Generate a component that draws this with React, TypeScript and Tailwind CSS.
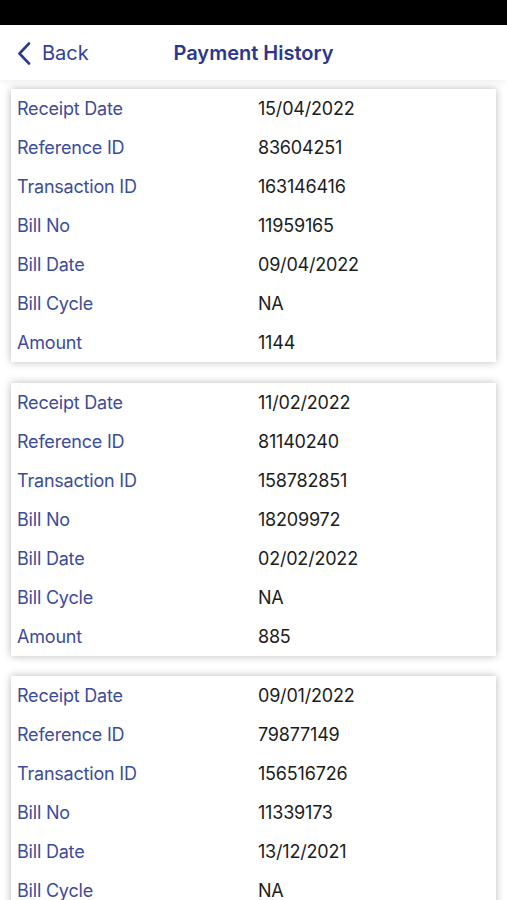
interface Payment {
  receiptDate: string;
  referenceId: string;
  transactionId: string;
  billNo: string;
  billDate: string;
  billCycle: string;
  amount: string;
}

const payments: Payment[] = [
  {
    receiptDate: '15/04/2022',
    referenceId: '83604251',
    transactionId: '163146416',
    billNo: '11959165',
    billDate: '09/04/2022',
    billCycle: 'NA',
    amount: '1144',
  },
  {
    receiptDate: '11/02/2022',
    referenceId: '81140240',
    transactionId: '158782851',
    billNo: '18209972',
    billDate: '02/02/2022',
    billCycle: 'NA',
    amount: '885',
  },
  {
    receiptDate: '09/01/2022',
    referenceId: '79877149',
    transactionId: '156516726',
    billNo: '11339173',
    billDate: '13/12/2021',
    billCycle: 'NA',
    amount: '',
  },
];

const fields: Array<[string, keyof Payment]> = [
  ['Receipt Date', 'receiptDate'],
  ['Reference ID', 'referenceId'],
  ['Transaction ID', 'transactionId'],
  ['Bill No', 'billNo'],
  ['Bill Date', 'billDate'],
  ['Bill Cycle', 'billCycle'],
  ['Amount', 'amount'],
];

export default function App() {
  return (
    <div
      className="w-[507px] h-[900px] overflow-hidden bg-white flex flex-col"
      style={{ fontFamily: 'Inter, "Liberation Sans", sans-serif' }}
    >
      <div className="h-[25px] bg-black shrink-0" />
      <div className="h-[55px] shrink-0 grid grid-cols-[1fr_auto_1fr] items-center px-[17px] shadow-[0_2px_6px_rgba(0,0,0,0.06)] relative z-10">
        <div className="flex items-center gap-[11px]">
          <svg width="14" height="23" viewBox="0 0 14 23" fill="none" className="mt-[1px]">
            <path
              d="M12 1.5 L2.5 11.5 L12 21.5"
              stroke="#2e3a8f"
              strokeWidth="2.6"
              strokeLinecap="round"
              strokeLinejoin="round"
            />
          </svg>
          <span className="text-[20px] text-[#34409a]">Back</span>
        </div>
        <h1 className="text-[20px] font-semibold text-[#2b378c]">Payment History</h1>
        <div />
      </div>
      <div className="flex flex-col gap-[20.5px] pt-[9px] px-[11px]">
        {payments.map((p) => (
          <div
            key={p.referenceId}
            className="bg-white shadow-[0_0_8px_rgba(0,0,0,0.28)] shrink-0"
          >
            {fields.map(([label, key]) => (
              <div key={key} className="h-[39px] flex items-center px-[6px]">
                <span className="w-[241px] text-[18px] text-[#3d4b9c] tracking-[-0.2px]">{label}</span>
                <span className="text-[18px] text-[#1c1c1c] tracking-[-0.2px]">{p[key]}</span>
              </div>
            ))}
          </div>
        ))}
      </div>
    </div>
  );
}
